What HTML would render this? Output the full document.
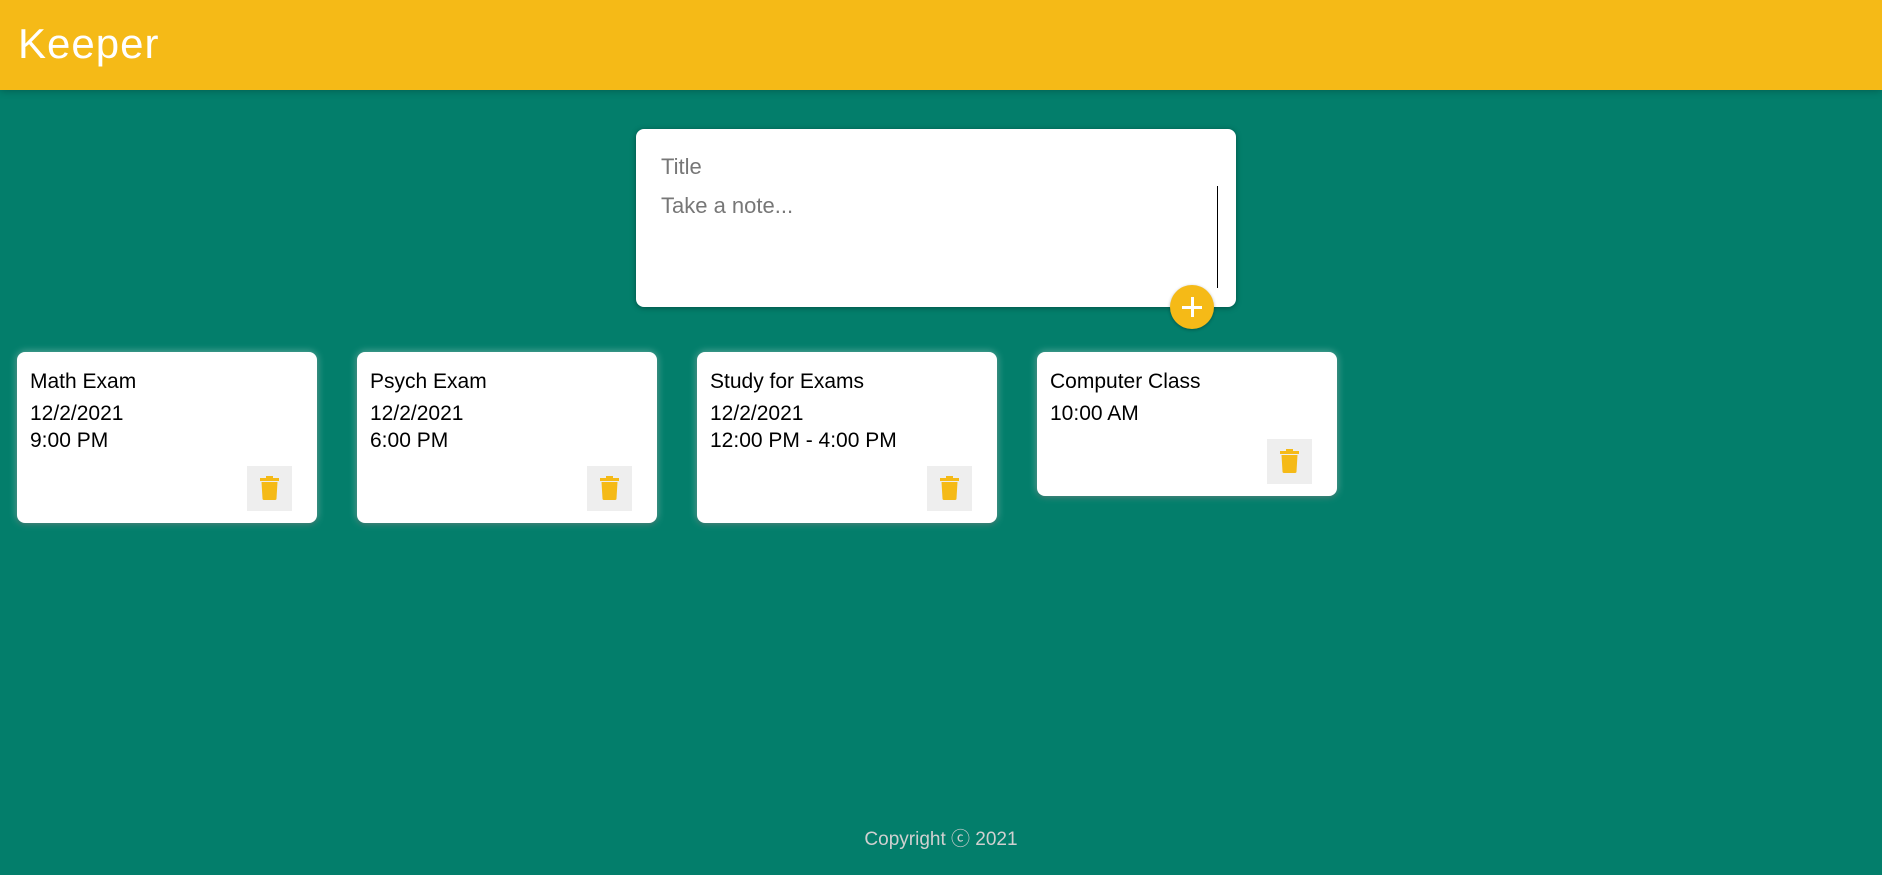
<!DOCTYPE html>
<html><head><meta charset="utf-8"><style>
*{margin:0;padding:0;box-sizing:border-box}
body{width:1882px;height:875px;overflow:hidden;background:#037e6b;font-family:"Liberation Sans",sans-serif;position:relative}
.hdr{position:absolute;left:0;top:0;width:1882px;height:90px;background:#f5ba17;box-shadow:0 0 8px rgba(0,0,0,.3)}
.hdr h1{position:absolute;left:18px;top:20px;color:#fff;font-size:42px;font-weight:normal;letter-spacing:1px}
.form{position:absolute;left:636px;top:129px;width:600px;height:178px;background:#fff;border-radius:8px;box-shadow:0 1px 6px rgba(0,0,0,.35)}
.form .t{position:absolute;left:25px;top:25px;font-size:22px;color:#777}
.form .n{position:absolute;left:25px;top:64px;font-size:22px;color:#777}
.cur{position:absolute;left:581px;top:57px;width:1px;height:102px;background:#000}
.add{position:absolute;left:1170px;top:285px;width:44px;height:44px;border-radius:50%;background:#f5ba17;box-shadow:0 1px 3px rgba(0,0,0,.3)}
.add:before,.add:after{content:"";position:absolute;background:#fff;left:21px;top:12px;width:2.5px;height:20px}
.add:after{left:12px;top:21px;width:20px;height:2.5px}
.card{position:absolute;top:352px;width:300px;height:171px;background:#fff;border-radius:8px;box-shadow:0 0 8px rgba(255,255,255,.45),0 2px 5px rgba(0,0,0,.3);padding:12px 13px;color:#000}
.card h2{font-size:21px;font-weight:normal;line-height:28px;margin-top:4px;margin-bottom:4px}
.card p{font-size:21px;line-height:27px}
.del{position:absolute;right:25px;bottom:12px;width:45px;height:45px;background:#eee}
.del svg{position:absolute;left:13px;top:10px}
.ft{position:absolute;left:0;width:1882px;top:824px;text-align:center;color:#d0d0d0;font-size:19px}
</style></head><body>
<div class="hdr"><h1>Keeper</h1></div>
<div class="form"><div class="t">Title</div><div class="n">Take a note...</div><div class="cur"></div></div>
<div class="add"></div>
<div class="card" style="left:17px"><h2>Math Exam</h2><p>12/2/2021</p><p>9:00 PM</p><div class="del"><svg width="19" height="24" viewBox="0 0 19 24"><rect x="0" y="2" width="19" height="3" fill="#f5ba17"/><rect x="6" y="0" width="7" height="3" fill="#f5ba17"/><path d="M1.5 6h16l-1 16.5q0 1.5-1.5 1.5h-11q-1.5 0-1.5-1.5z" fill="#f5ba17"/></svg></div></div>
<div class="card" style="left:357px"><h2>Psych Exam</h2><p>12/2/2021</p><p>6:00 PM</p><div class="del"><svg width="19" height="24" viewBox="0 0 19 24"><rect x="0" y="2" width="19" height="3" fill="#f5ba17"/><rect x="6" y="0" width="7" height="3" fill="#f5ba17"/><path d="M1.5 6h16l-1 16.5q0 1.5-1.5 1.5h-11q-1.5 0-1.5-1.5z" fill="#f5ba17"/></svg></div></div>
<div class="card" style="left:697px"><h2>Study for Exams</h2><p>12/2/2021</p><p>12:00 PM - 4:00 PM</p><div class="del"><svg width="19" height="24" viewBox="0 0 19 24"><rect x="0" y="2" width="19" height="3" fill="#f5ba17"/><rect x="6" y="0" width="7" height="3" fill="#f5ba17"/><path d="M1.5 6h16l-1 16.5q0 1.5-1.5 1.5h-11q-1.5 0-1.5-1.5z" fill="#f5ba17"/></svg></div></div>
<div class="card" style="left:1037px;height:144px"><h2>Computer Class</h2><p>10:00 AM</p><div class="del"><svg width="19" height="24" viewBox="0 0 19 24"><rect x="0" y="2" width="19" height="3" fill="#f5ba17"/><rect x="6" y="0" width="7" height="3" fill="#f5ba17"/><path d="M1.5 6h16l-1 16.5q0 1.5-1.5 1.5h-11q-1.5 0-1.5-1.5z" fill="#f5ba17"/></svg></div></div>
<div class="ft">Copyright ⓒ 2021</div>
</body></html>
